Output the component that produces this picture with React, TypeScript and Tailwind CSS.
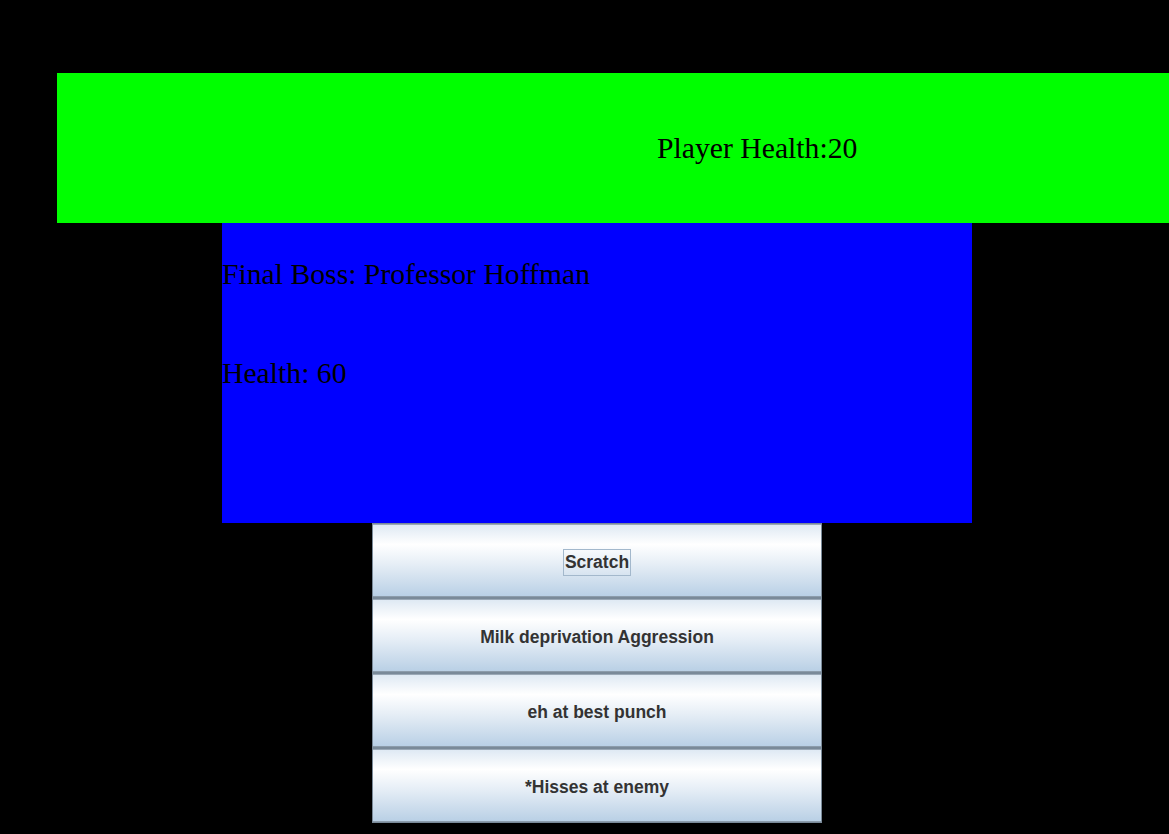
import React from "react";

const serif = { fontFamily: '"Liberation Serif", "Times New Roman", serif' };

function GameButton({ label, focused }: { label: string; focused?: boolean }) {
  return (
    <div className="flex h-[75px] items-center justify-center border border-[#7a8a99] bg-[linear-gradient(to_bottom,#dde8f3_0%,#ffffff_28%,#e6eef6_55%,#b8cfe5_100%)] shadow-[inset_0_-1px_0_0_#8c9cab,inset_0_1px_0_0_#9aa8b6]">
      <span
        className={
          "mt-[4px] text-[17.5px] font-bold leading-[25px] text-[#333333] " +
          (focused ? "border border-[#a3b8cc] px-[1px]" : "")
        }
        style={{ fontFamily: '"Liberation Sans", Arial, sans-serif' }}
      >
        {label}
      </span>
    </div>
  );
}

export default function App() {
  return (
    <div className="flex h-[834px] w-[1169px] flex-col overflow-hidden bg-black pt-[73px]">
      <div className="ml-[57px] flex h-[150px] items-center bg-[#00ff00] pl-[600px]">
        <span className="text-[29.7px] text-black whitespace-nowrap" style={serif}>
          Player Health:20
        </span>
      </div>
      <div className="ml-[222px] grid h-[300px] w-[750px] grid-rows-3 bg-[#0000ff]">
        <div className="flex items-center pt-[2px]">
          <span className="text-[29.7px] text-black whitespace-nowrap" style={serif}>
            Final Boss: Professor Hoffman
          </span>
        </div>
        <div className="flex items-center">
          <span className="text-[29.7px] text-black whitespace-nowrap" style={serif}>
            Health: 60
          </span>
        </div>
        <div />
      </div>
      <div className="ml-[372px] flex w-[450px] flex-col">
        <GameButton label="Scratch" focused />
        <GameButton label="Milk deprivation Aggression" />
        <GameButton label="eh at best punch" />
        <GameButton label="*Hisses at enemy" />
      </div>
    </div>
  );
}
